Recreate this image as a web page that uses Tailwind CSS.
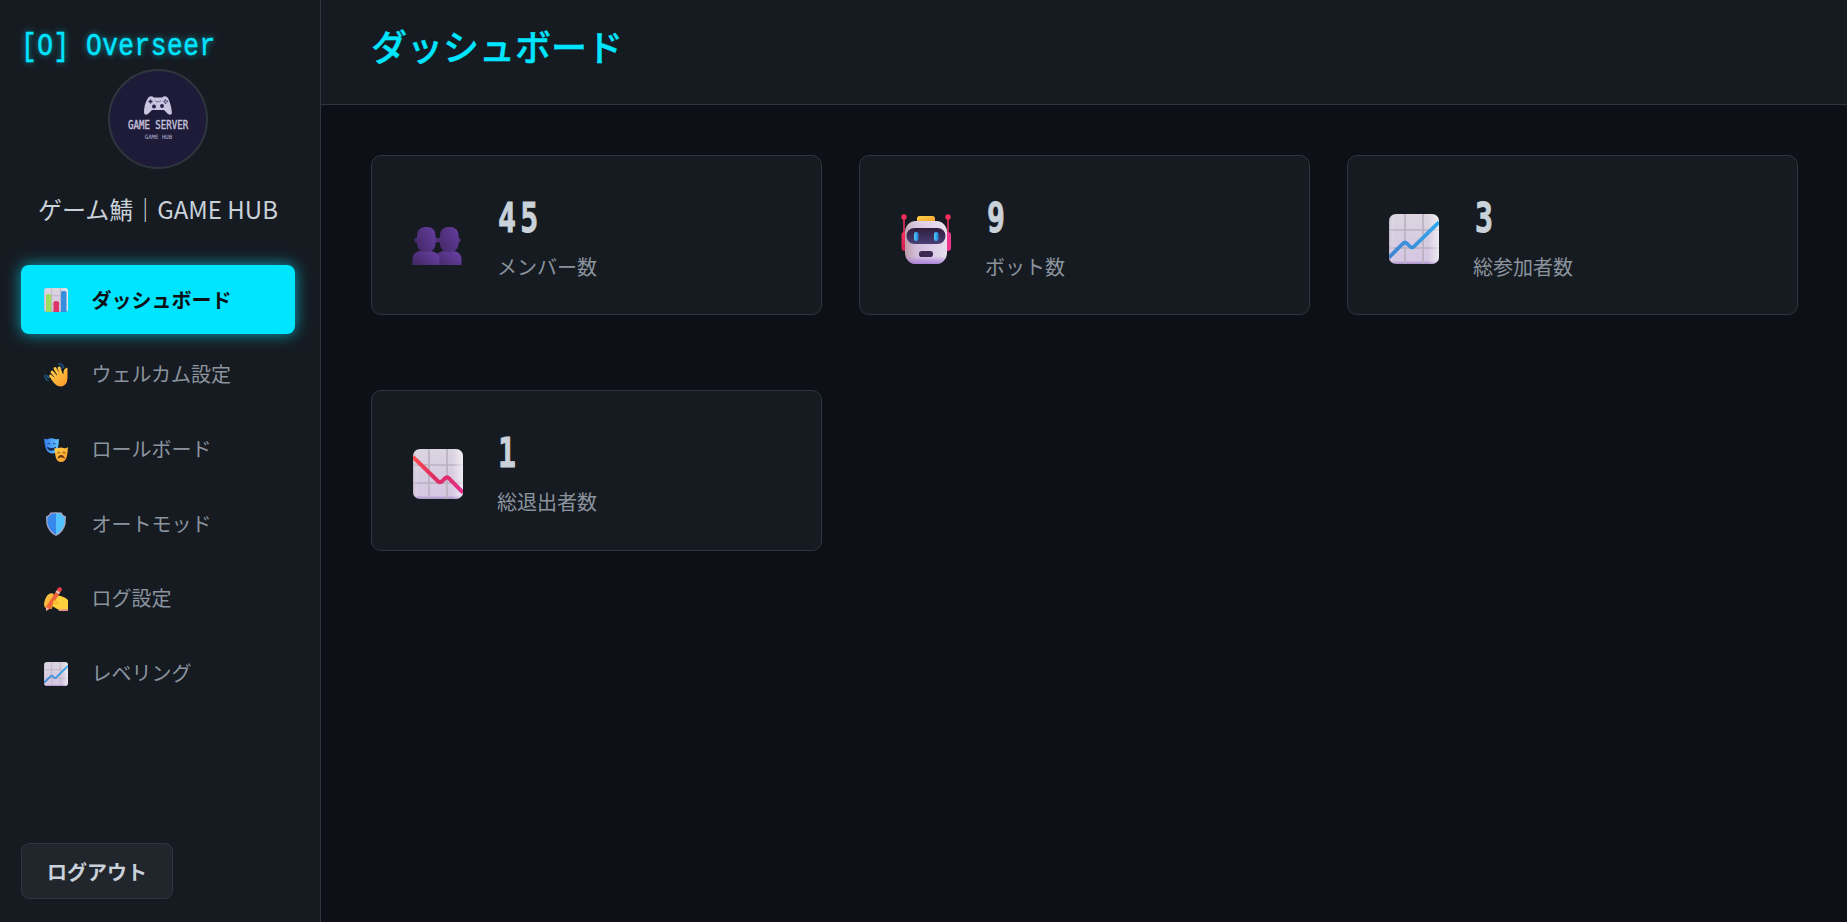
<!DOCTYPE html>
<html lang="ja">
<head>
<meta charset="utf-8">
<title>Overseer</title>
<script src="https://cdn.jsdelivr.net/npm/@tailwindcss/browser@4"></script>
</head>
<body class="flex h-screen overflow-hidden bg-[#0d1117] font-['Noto_Sans_CJK_JP',sans-serif] text-[20px] text-[#c9d1d9]">
<svg class="absolute size-0">
  <defs>
    <linearGradient id="paper" x1="0" y1="0" x2="0" y2="1"><stop offset="0" stop-color="#dad5df"/><stop offset=".5" stop-color="#d7cde2"/><stop offset=".93" stop-color="#d6c7e3"/><stop offset="1" stop-color="#a98fca"/></linearGradient>
    <linearGradient id="edge"><stop offset="0" stop-color="#b3a8bb" stop-opacity=".7"/><stop offset=".1" stop-color="#fff" stop-opacity="0"/><stop offset=".78" stop-color="#fff" stop-opacity="0"/><stop offset="1" stop-color="#fff" stop-opacity=".6"/></linearGradient>
    <linearGradient id="blue" x1="0" y1="1" x2="1" y2="0"><stop offset="0" stop-color="#4183d0"/><stop offset="1" stop-color="#31a9ef"/></linearGradient>
    <linearGradient id="red" x1="0" y1="0" x2="1" y2="1"><stop offset="0" stop-color="#ff4e4e"/><stop offset=".5" stop-color="#dc2c62"/><stop offset="1" stop-color="#e72e8c"/></linearGradient>
    <linearGradient id="gold" x1="0" y1="0" x2=".7" y2="1"><stop offset="0" stop-color="#ffd348"/><stop offset="1" stop-color="#fb9d2f"/></linearGradient>
    <linearGradient id="mask" x1="0" x2="1"><stop offset="0" stop-color="#367bea"/><stop offset="1" stop-color="#62c4ff"/></linearGradient>
    <linearGradient id="headp" x1="0" x2="1" y1=".7" y2="0"><stop offset="0" stop-color="#472b6c"/><stop offset=".7" stop-color="#5c3790"/><stop offset="1" stop-color="#66409e"/></linearGradient>
    <linearGradient id="bodyp" x1="0" x2="1" y1=".6" y2="0"><stop offset="0" stop-color="#452a6c"/><stop offset=".8" stop-color="#653d9b"/><stop offset="1" stop-color="#7044ac"/></linearGradient>
    <linearGradient id="robot" x1="0" x2="1"><stop offset="0" stop-color="#bd9ba9"/><stop offset=".25" stop-color="#d0bdd9"/><stop offset=".6" stop-color="#dacbe6"/><stop offset="1" stop-color="#e6dfec"/></linearGradient>
    <linearGradient id="shade" x1="0" x2="0" y1="0" y2="1"><stop offset="0" stop-color="#fff" stop-opacity=".25"/><stop offset=".3" stop-color="#fff" stop-opacity="0"/><stop offset=".82" stop-color="#a578d8" stop-opacity="0"/><stop offset="1" stop-color="#a578d8" stop-opacity=".9"/></linearGradient>
    <linearGradient id="visor" x1="0" x2="0" y1="0" y2="1"><stop offset="0" stop-color="#301d3b"/><stop offset="1" stop-color="#4a3f76"/></linearGradient>
    <linearGradient id="eye"><stop offset="0" stop-color="#55c8ff"/><stop offset="1" stop-color="#1c84d4"/></linearGradient>
    <linearGradient id="side" x1="0" x2="0" y1="0" y2="1"><stop offset="0" stop-color="#fb3060"/><stop offset="1" stop-color="#c9234f"/></linearGradient>
    <symbol id="grid" viewBox="0 0 50 50"><rect width="50" height="50" rx="7" fill="url(#paper)"/><path d="M16 0v50M34 0v50M0 16h50M0 34h50" stroke="#b9b0c0" stroke-width="1.600"/><rect width="50" height="50" rx="7" fill="url(#edge)"/></symbol>
    <symbol id="up" viewBox="0 0 50 50"><use href="#grid"/><path d="M0 43.500 14 29.500q2-2 4 0l3 3q2 2 4 0L50 8" fill="none" stroke="url(#blue)" stroke-width="3.800"/></symbol>
    <symbol id="down" viewBox="0 0 50 50"><use href="#grid"/><path d="M0 8 25 32.300q2 1.800 4 0l3-3q2-2 4 0L50 43.500" fill="none" stroke="url(#red)" stroke-width="4"/></symbol>
  </defs>
</svg>

<aside class="flex h-full w-[321px] shrink-0 flex-col border-r border-[#30363d] bg-[#161b22] px-[21px] pb-[23px]">
  <div class="flex h-[69px] items-center pt-6">
    <div class="origin-left scale-x-[.845] whitespace-pre font-['Liberation_Mono',monospace] text-[31px] leading-none tracking-[.600px] text-[#00e5ff] [-webkit-text-stroke:.5px_#00e5ff] [text-shadow:0_0_7px_#00e5ffaa]">[O] Overseer</div>
  </div>
  <div class="mx-auto flex h-[100px] w-[100px] shrink-0 -translate-x-[2px] flex-col items-center rounded-full border-2 border-[#30363d] bg-[#1e1b39] pt-[25px]">
    <svg class="h-[19px] w-7 shrink-0" viewBox="0 0 28 19"><path d="M4 2Q5 0 8 .3L10 1.500h8L20 .3Q23 0 24 2q3 6 4 15-1 3-4 1l-4-4H8l-4 4q-3 2-4-1Q0 8 4 2Z" fill="#c9c5e0"/><path d="M6.500 3.500v4M4.500 5.500h4M21.500 3.500v1.300M21.500 6.500v1.300M19.500 5.600h1.300M22.500 5.600h1.300" stroke="#29254a" stroke-width="1.500"/><circle cx="10" cy="10.500" r="2" fill="#29254a"/><circle cx="18" cy="10" r="2" fill="#29254a"/><path d="m11 4.500 1.500 1.200h3L17 4.500" stroke="#77729a" fill="none"/></svg>
    <div class="mt-[5px] h-[11px] scale-x-[.79] whitespace-nowrap font-['DejaVu_Sans_Mono',monospace] text-[11.500px] leading-[11px] text-[#c4c0da] [-webkit-text-stroke:.4px_#c4c0da]">GAME SERVER</div>
    <div class="mt-[3px] scale-x-[.95] whitespace-nowrap font-['DejaVu_Sans_Mono',monospace] text-[6px] leading-[6px] text-[#b5b1cf]">GAME HUB</div>
  </div>
  <div class="mt-[22px] flex h-9 -translate-x-[2px] items-center justify-center whitespace-nowrap text-[24px] leading-9">ゲーム鯖｜GAME HUB</div>
  <nav class="mt-[38px] flex w-[274px] flex-col gap-[5.800px] text-[#8b949e]">
    <a class="flex h-[69px] items-center gap-[23.500px] rounded-lg bg-[#00e5ff] pl-[23px] font-bold text-[#0d1117] shadow-[0_0_15px_#00e5ffaa]">
      <svg class="size-6" viewBox="0 0 24 24"><use href="#grid"/><path d="M2 7q2.500-2 5.300 0v17H2z" fill="#9bdc61"/><path d="M9.500 14q2-2 5.500 0v10H9.500z" fill="#df3468"/><path d="M17 3.500q3-1 5.500 0V24H17z" fill="#378ddd"/></svg>ダッシュボード</a>
    <a class="flex h-[69px] items-center gap-[23.500px] pl-[23px]">
      <svg class="mt-[2px] size-6" viewBox="0 0 24 24"><path d="M14 1.200q4.500-1.200 5.800 4M15 3.500q2.500 0 3 2.500M.7 11.500q0 5 4 6M3 12q0 2.500 2.500 3" fill="none" stroke="#23608f" stroke-width="1.200"/><path d="m6.500 13 4 4M8 9l5 6M11 5.500l4.500 7.500M15 5l3 8" stroke="#ffc542" stroke-width="2.800" stroke-linecap="round"/><path d="m8.500 13.500 2 1 4-4 5 .5q-.5-5 3-6.300 1-.2 1 1.300v9q-.5 8-6.500 8.500-4 0-7-3.500l-3-4Z" fill="url(#gold)"/><path d="m9.200 8.500 4 5M12.500 5.800l3.300 6" stroke="#ea9429" stroke-width=".7"/></svg>ウェルカム設定</a>
    <a class="flex h-[69px] items-center gap-[23.500px] pl-[23px]">
      <svg class="mt-px size-6" viewBox="0 0 24 24"><path d="M0 .5q2 1.200 4 .5 3-1.500 7 0 2 .8 4-.3-.3 5-1 9.300-2 6-6 5.500-5-.5-6.500-6Q.3 5 0 .5Z" fill="url(#mask)"/><path d="M3.500 6q1.200-1.300 2.500 0M9 6q1.200-1.300 2.500 0" stroke="#173e86" fill="none"/><path d="M3 8.500q4.500 3 9 0-.5 4.300-4.500 4.300T3 8.500" fill="#182e5c"/><path d="M10.500 10q2 .5 4 0 2.500-1 5 0 2.500.7 4.500-1-.3 5-1 9-1.500 6-6 6t-5.500-6Q10.800 14 10.500 10Z" fill="url(#gold)"/><path d="M13 15.500q2-2.500 3-.5M18.500 15q1-2 3 .5" stroke="#79450f" fill="none"/><path d="M13.500 21q.5-4 3.500-4t4 4q-3.500-3.500-7.500 0" fill="#683515"/></svg>ロールボード</a>
    <a class="flex h-[69px] items-center gap-[23.500px] pl-[23px] pt-px">
      <svg class="size-6" viewBox="0 0 24 24"><path d="M12 .3q3 0 5.500.2.700 2.500 4.500 4-.3 2.500-.3 7Q20 20 12 24 4 20 2.300 11.500L2 4.500Q5.800 3 6.500.5 9 .3 12 .3Z" fill="#aaa7c0"/><path d="M12 1.500H7.500Q6.500 4 3.300 5.300L3.500 11Q5 18.500 12 22.800Z" fill="#3688ed"/><path d="M12 1.500h4.500Q17.500 4 20.700 5.300L20.500 11Q19 18.500 12 22.800Z" fill="#51c2ff"/></svg>オートモッド</a>
    <a class="flex h-[69px] items-center gap-[23.500px] pb-px pl-[23px]">
      <svg class="mt-[2px] size-6" viewBox="0 0 24 24"><path d="M0 17Q1 9 6 6.500q4-1 4 2L8 22l-6-1q-2-1-2-4Z" fill="url(#gold)"/><path d="M13 8.500q6 0 11 4.500v10h-9l-7-4 1-5Z" fill="#ffd03e"/><path d="m14 1.500 3.500 1.800L6 22l-4 2v-4z" fill="#f06339"/><path d="m14 1 2-1 2 1.500-1 3-3.500-2z" fill="#ee3946"/><path d="m12.500 3.500 3.500 2-1 1.500L11.500 5z" fill="#dfc2cc"/><path d="m2 20 3 1.500L2 24z" fill="#e9b4af"/><path d="M15 15q-3-3-6-1-1 2 1 3l3 1" fill="#fcbb32"/><path d="m14 22.500 10-.5v2h-9z" fill="#ed8f88"/></svg>ログ設定</a>
    <a class="flex h-[69px] items-center gap-[23.500px] pl-[23px]"><svg class="mt-[2px] size-6" viewBox="0 0 50 50"><use href="#up"/></svg>レベリング</a>
  </nav>
  <button class="mt-auto h-14 w-[152px] rounded-lg border border-[#30363d] bg-[#21262d] pt-[2px] font-bold">ログアウト</button>
</aside>

<div class="flex min-w-0 grow flex-col">
  <header class="h-[105px] border-b border-[#30363d] bg-[#161b22] px-[50px] pt-[18px]"><h1 class="text-[36px] font-medium leading-[54px] text-[#00e5ff] [-webkit-text-stroke:.4px_#00e5ff]">ダッシュボード</h1></header>
  <main class="grid grid-cols-3 gap-x-[37px] gap-y-[75px] py-[50px] pl-[50px] pr-[49px]">
    <section class="flex h-[160px] items-center gap-[35px] rounded-[10px] border border-[#30363d] bg-[#161b22] pl-10 pt-[7px]">
      <svg class="mt-[2px] size-[50px]" viewBox="0 0 50 50"><path d="M20 50V43Q26 36.500 32 36h10q7 1.500 7.500 7.500V50z" fill="url(#bodyp)"/><circle cx="28" cy="25" r="2.600" fill="#4d2f76"/><circle cx="46" cy="25" r="2.600" fill="#54327f"/><rect x="28" y="12" width="18.500" height="25" rx="8" fill="url(#headp)"/><path d="M.5 50V43.500Q1 37 8 36h11q7.500 1.500 8.500 7.500V50z" fill="url(#bodyp)"/><circle cx="5" cy="25" r="2.600" fill="#482b6d"/><circle cx="23.500" cy="25" r="2.600" fill="#54327f"/><rect x="5" y="12" width="18.500" height="25" rx="8" fill="url(#headp)"/></svg>
      <div class="flex flex-col gap-[11px]"><div class="h-[46px] w-fit origin-left translate-x-px scale-x-[.72] font-['DejaVu_Sans_Mono',monospace] text-[41.500px] font-bold leading-[46px] tracking-[5.800px] [-webkit-text-stroke:1px_#c9d1d9]">45</div><div class="leading-[30px] text-[#8b949e]">メンバー数</div></div>
    </section>
    <section class="flex h-[160px] items-center gap-[34px] rounded-[10px] border border-[#30363d] bg-[#161b22] pl-[41px] pt-[7px]">
      <svg class="size-[50px]" viewBox="0 0 50 50"><path d="M3 4v20M47 4v20" stroke="#bd2b52" stroke-width="2"/><circle cx="3" cy="3" r="2.700" fill="#f82e5e"/><circle cx="47" cy="3" r="2.700" fill="#f82e5e"/><rect x=".5" y="18" width="7" height="19" rx="3" fill="url(#side)"/><rect x="43" y="18" width="7" height="19" rx="3" fill="#ee368c"/><rect x="16" y="2" width="18" height="8" rx="2.500" fill="url(#gold)"/><rect x="4" y="7" width="42" height="43" rx="11" fill="url(#robot)"/><rect x="4" y="7" width="42" height="43" rx="11" fill="url(#shade)"/><rect x="5.500" y="14" width="39" height="16" rx="8" fill="url(#visor)"/><rect x="13" y="18" width="4.500" height="9" rx="2.200" fill="url(#eye)"/><rect x="33" y="18" width="4.500" height="9" rx="2.200" fill="url(#eye)"/><rect x="18" y="37" width="14" height="6" rx="2.800" fill="#3b2952"/></svg>
      <div class="flex flex-col gap-[11px]"><div class="h-[46px] w-fit origin-left translate-x-[2px] scale-x-[.72] font-['DejaVu_Sans_Mono',monospace] text-[41.500px] font-bold leading-[46px] [-webkit-text-stroke:1px_#c9d1d9]">9</div><div class="leading-[30px] text-[#8b949e]">ボット数</div></div>
    </section>
    <section class="flex h-[160px] items-center gap-[34px] rounded-[10px] border border-[#30363d] bg-[#161b22] pl-[41px] pt-[7px]">
      <svg class="size-[50px]" viewBox="0 0 50 50"><use href="#up"/></svg>
      <div class="flex flex-col gap-[11px]"><div class="h-[46px] w-fit origin-left translate-x-[2px] scale-x-[.72] font-['DejaVu_Sans_Mono',monospace] text-[41.500px] font-bold leading-[46px] [-webkit-text-stroke:1px_#c9d1d9]">3</div><div class="leading-[30px] text-[#8b949e]">総参加者数</div></div>
    </section>
    <section class="flex h-[161px] items-center gap-[34.500px] rounded-[10px] border border-[#30363d] bg-[#161b22] pl-[40.500px] pt-[6px]">
      <svg class="mt-px size-[50px]" viewBox="0 0 50 50"><use href="#down"/></svg>
      <div class="flex flex-col gap-[11px]"><div class="h-[46px] w-fit origin-left translate-x-px scale-x-[.72] font-['DejaVu_Sans_Mono',monospace] text-[41.500px] font-bold leading-[46px] [-webkit-text-stroke:1px_#c9d1d9]">1</div><div class="leading-[30px] text-[#8b949e]">総退出者数</div></div>
    </section>
  </main>
</div>
</body>
</html>
